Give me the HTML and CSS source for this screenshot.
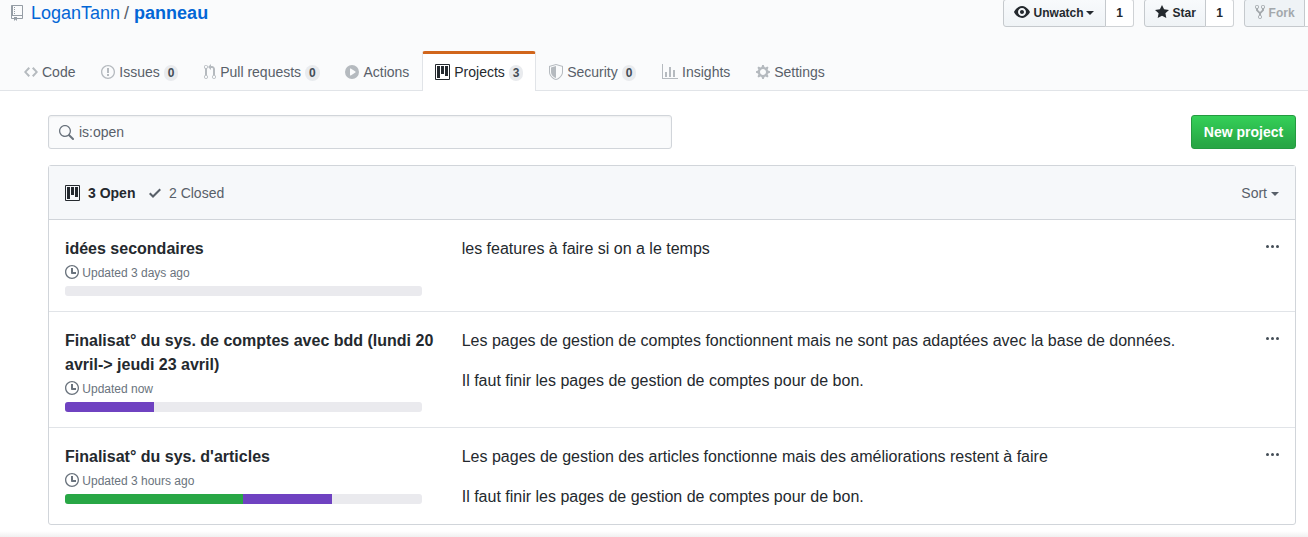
FILE: index.html
```html
<!DOCTYPE html>
<html lang="en">
<head>
<meta charset="utf-8">
<title>LoganTann/panneau</title>
<link rel="stylesheet" href="styles.css">
</head>
<body>
<svg class="sprite" aria-hidden="true">
  <symbol id="project" viewBox="0 0 15 16"><path fill-rule="evenodd" d="M10 12h3V2h-3v10zm-4-2h3V2H6v8zm-4 4h3V2H2v12zm-1 1h13V1H1v14zM14 0H1a1 1 0 0 0-1 1v14a1 1 0 0 0 1 1h13a1 1 0 0 0 1-1V1a1 1 0 0 0-1-1z"/></symbol>
  <symbol id="clock" viewBox="0 0 14 16"><path fill-rule="evenodd" d="M8 8h3v2H7c-.55 0-1-.45-1-1V4h2v4zM7 2.3c3.14 0 5.7 2.56 5.7 5.7s-2.56 5.7-5.7 5.7A5.71 5.71 0 0 1 1.3 8c0-3.14 2.56-5.7 5.7-5.7zM7 1C3.14 1 0 4.14 0 8s3.14 7 7 7 7-3.14 7-7-3.14-7-7-7z"/></symbol>
  <symbol id="dots" viewBox="0 0 13 16"><circle cx="1.5" cy="8.5" r="1.5"/><circle cx="6.5" cy="8.5" r="1.5"/><circle cx="11.5" cy="8.5" r="1.5"/></symbol>
</svg>
<header class="repohead">
  <div class="repohead-top">
    <h1 class="repo-title">
      <svg class="icon" width="12" height="16" viewBox="0 0 12 16"><path fill-rule="evenodd" d="M4 9H3V8h1v1zm0-3H3v1h1V6zm0-2H3v1h1V4zm0-2H3v1h1V2zm8-1v12c0 .55-.45 1-1 1H6v2l-1.5-1.5L3 16v-2H1c-.55 0-1-.45-1-1V1c0-.55.45-1 1-1h10c.55 0 1 .45 1 1zm-1 10H1v2h2v-1h3v1h5v-2zm0-10H2v9h9V1z"/></svg>
      <a>LoganTann</a><span class="slash">/</span><a class="name">panneau</a>
    </h1>
    <div class="actions">
      <div class="action action-watch"><span class="btn-sm"><svg class="icon" width="16" height="16" viewBox="0 0 16 16"><path fill-rule="evenodd" d="M8.06 2C3 2 0 8 0 8s3 6 8.06 6C13 14 16 8 16 8s-3-6-7.94-6zM8 12c-2.2 0-4-1.78-4-4 0-2.2 1.8-4 4-4 2.22 0 4 1.8 4 4 0 2.22-1.78 4-4 4zm2-4c0 1.11-.89 2-2 2-1.11 0-2-.89-2-2 0-1.11.89-2 2-2 1.11 0 2 .89 2 2z"/></svg>Unwatch<i class="caret"></i></span><span class="social-count">1</span></div>
      <div class="action action-star"><span class="btn-sm"><svg class="icon" width="14" height="16" viewBox="0 0 14 16"><path d="M14 6l-4.9-.64L7 1 4.9 5.36 0 6l3.6 3.26L2.67 14 7 11.67 11.33 14l-.93-4.74L14 6z"/></svg>Star</span><span class="social-count">1</span></div>
      <div class="action action-fork"><span class="btn-sm disabled"><svg class="icon" width="10" height="16" viewBox="0 0 10 16"><path fill-rule="evenodd" d="M8 1a1.993 1.993 0 0 0-1 3.72V6L5 8 3 6V4.72A1.993 1.993 0 0 0 2 1a1.993 1.993 0 0 0-1 3.72V6.5l3 3v1.78A1.993 1.993 0 0 0 5 15a1.993 1.993 0 0 0 1-3.72V9.5l3-3V4.72A1.993 1.993 0 0 0 8 1zM2 4.2C1.34 4.2.8 3.65.8 3c0-.65.55-1.2 1.2-1.2.65 0 1.2.55 1.2 1.2 0 .65-.55 1.2-1.2 1.2zm3 10c-.66 0-1.2-.55-1.2-1.2 0-.65.55-1.2 1.2-1.2.65 0 1.2.55 1.2 1.2 0 .65-.55 1.2-1.2 1.2zm3-10c-.66 0-1.2-.55-1.2-1.2 0-.65.55-1.2 1.2-1.2.65 0 1.2.55 1.2 1.2 0 .65-.55 1.2-1.2 1.2z"/></svg>Fork</span><span class="social-count cut"></span></div>
    </div>
  </div>
  <nav class="tabs">
    <a class="tab"><svg class="icon" width="14" height="16" viewBox="0 0 14 16"><path fill-rule="evenodd" d="M9.5 3L8 4.5 11.5 8 8 11.5 9.5 13 14 8 9.5 3zm-5 0L0 8l4.5 5L6 11.5 2.5 8 6 4.5 4.5 3z"/></svg>Code</a>
    <a class="tab"><svg class="icon" width="14" height="16" viewBox="0 0 14 16"><path fill-rule="evenodd" d="M7 2.3c3.14 0 5.7 2.56 5.7 5.7s-2.56 5.7-5.7 5.7A5.71 5.71 0 0 1 1.3 8c0-3.14 2.56-5.7 5.7-5.7zM7 1C3.14 1 0 4.14 0 8s3.14 7 7 7 7-3.14 7-7-3.14-7-7-7zm1 3H6v5h2V4zm0 6H6v2h2v-2z"/></svg>Issues<span class="counter">0</span></a>
    <a class="tab"><svg class="icon" width="12" height="16" viewBox="0 0 12 16"><path fill-rule="evenodd" d="M11 11.28V5c-.03-.78-.34-1.47-.94-2.06C9.46 2.35 8.78 2.03 8 2H7V0L4 3l3 3V4h1c.27.02.48.11.69.31.21.2.3.42.31.69v6.28A1.993 1.993 0 0 0 10 15a1.993 1.993 0 0 0 1-3.72zm-1 2.92c-.66 0-1.2-.55-1.2-1.2 0-.65.55-1.2 1.2-1.2.65 0 1.2.55 1.2 1.2 0 .65-.55 1.2-1.2 1.2zM4 3c0-1.11-.89-2-2-2a1.993 1.993 0 0 0-1 3.72v6.56A1.993 1.993 0 0 0 2 15a1.993 1.993 0 0 0 1-3.72V4.72c.59-.34 1-.98 1-1.72zm-.8 10c0 .66-.55 1.2-1.2 1.2-.65 0-1.2-.55-1.2-1.2 0-.65.55-1.2 1.2-1.2.65 0 1.2.55 1.2 1.2zM2 4.2C1.34 4.2.8 3.65.8 3c0-.65.55-1.2 1.2-1.2.65 0 1.2.55 1.2 1.2 0 .65-.55 1.2-1.2 1.2z"/></svg>Pull requests<span class="counter">0</span></a>
    <a class="tab"><svg class="icon" width="14" height="16" viewBox="0 0 14 16"><path fill-rule="evenodd" d="M14 8A7 7 0 1 1 0 8a7 7 0 0 1 14 0zm-8.223 3.482l4.599-3.066a.5.5 0 0 0 0-.832L5.777 4.518A.5.5 0 0 0 5 4.934v6.132a.5.5 0 0 0 .777.416z"/></svg>Actions</a>
    <a class="tab selected"><svg class="icon" width="15" height="16"><use href="#project"/></svg>Projects<span class="counter">3</span></a>
    <a class="tab"><svg class="icon" width="14" height="16" viewBox="0 0 14 16"><path fill-rule="evenodd" d="M0 2l7-2 7 2v6.02C14 12.69 8.69 16 7 16c-1.69 0-7-3.31-7-7.98V2zm1 .75L7 1l6 1.75v5.268C13 12.104 8.449 15 7 15c-1.449 0-6-2.896-6-6.982V2.75zm1 .75L7 2v12c-1.207 0-5-2.482-5-5.985V3.5z"/></svg>Security<span class="counter">0</span></a>
    <a class="tab"><svg class="icon" width="16" height="16" viewBox="0 0 16 16"><path fill-rule="evenodd" d="M16 14v1H0V0h1v14h15zM5 13H3V8h2v5zm4 0H7V3h2v10zm4 0h-2V6h2v7z"/></svg>Insights</a>
    <a class="tab"><svg class="icon" width="14" height="16" viewBox="0 0 14 16"><path fill-rule="evenodd" d="M14 8.77v-1.6l-1.94-.64-.45-1.09.88-1.84-1.13-1.13-1.81.91-1.09-.45-.69-1.92h-1.6l-.63 1.94-1.11.45-1.84-.88-1.13 1.13.91 1.81-.45 1.09L0 7.23v1.59l1.94.64.45 1.09-.88 1.84 1.13 1.13 1.81-.91 1.09.45.69 1.92h1.59l.63-1.94 1.11-.45 1.84.88 1.13-1.13-.92-1.81.47-1.09L14 8.75v.02zM7 11c-1.66 0-3-1.34-3-3s1.34-3 3-3 3 1.34 3 3-1.34 3-3 3z"/></svg>Settings</a>
  </nav>
</header>
<main class="content">
  <div class="toolbar">
    <div class="search"><svg class="icon" width="16" height="16" viewBox="0 0 16 16"><path fill-rule="evenodd" d="M15.7 13.3l-3.81-3.83A5.93 5.93 0 0 0 13 6c0-3.31-2.69-6-6-6S1 2.69 1 6s2.69 6 6 6c1.3 0 2.48-.41 3.47-1.11l3.83 3.81c.19.2.45.3.7.3.25 0 .52-.09.7-.3a.996.996 0 0 0 0-1.41v.01zM7 10.7c-2.59 0-4.7-2.11-4.7-4.7 0-2.59 2.11-4.7 4.7-4.7 2.59 0 4.7 2.11 4.7 4.7 0 2.59-2.11 4.7-4.7 4.7z"/></svg>is:open</div>
    <a class="btn-primary">New project</a>
  </div>
  <section class="box">
    <div class="box-header">
      <span class="state open"><svg class="icon" width="15" height="16"><use href="#project"/></svg>3 Open</span>
      <span class="state closed"><svg class="icon" width="12" height="16" viewBox="0 0 12 16"><path d="M12 5l-8 8-4-4 1.5-1.5L4 10l6.5-6.5L12 5z"/></svg>2 Closed</span>
      <span class="sort">Sort<i class="caret"></i></span>
    </div>
    <article class="row">
      <div class="info">
        <h4>idées secondaires</h4>
        <div class="meta"><svg class="icon" width="14" height="16"><use href="#clock"/></svg>Updated 3 days ago</div>
        <div class="progress"></div>
      </div>
      <div class="desc"><p>les features à faire si on a le temps</p></div>
      <svg class="icon menu" width="13" height="16"><use href="#dots"/></svg>
    </article>
    <article class="row">
      <div class="info">
        <h4>Finalisat° du sys. de comptes avec bdd (lundi 20 avril-&gt; jeudi 23 avril)</h4>
        <div class="meta"><svg class="icon" width="14" height="16"><use href="#clock"/></svg>Updated now</div>
        <div class="progress"><span class="doing" style="width:25%"></span></div>
      </div>
      <div class="desc"><p>Les pages de gestion de comptes fonctionnent mais ne sont pas adaptées avec la base de données.</p><p>Il faut finir les pages de gestion de comptes pour de bon.</p></div>
      <svg class="icon menu" width="13" height="16"><use href="#dots"/></svg>
    </article>
    <article class="row">
      <div class="info">
        <h4>Finalisat° du sys. d'articles</h4>
        <div class="meta"><svg class="icon" width="14" height="16"><use href="#clock"/></svg>Updated 3 hours ago</div>
        <div class="progress"><span class="done" style="width:49.8%"></span><span class="doing" style="width:25%"></span></div>
      </div>
      <div class="desc"><p>Les pages de gestion des articles fonctionne mais des améliorations restent à faire</p><p>Il faut finir les pages de gestion de comptes pour de bon.</p></div>
      <svg class="icon menu" width="13" height="16"><use href="#dots"/></svg>
    </article>
  </section>
</main>
<div class="bottom-shade"></div>
</body>
</html>
```
FILE: styles.css
```css
* { box-sizing: border-box; }
body {
  margin: 0;
  height: 537px;
  overflow: hidden;
  display: flex;
  flex-direction: column;
  background: #fff;
  color: #24292e;
  font: 14px/21px "Liberation Sans", Arial, sans-serif;
}
.sprite { display: none; }
.icon { fill: currentColor; flex: none; display: block; }
.caret {
  border: 4px solid transparent;
  border-top-color: currentColor;
  border-bottom: 0;
}

.repohead {
  height: 91px;
  flex: none;
  display: flex;
  flex-direction: column;
  justify-content: space-between;
  background: #fafbfc;
  border-bottom: 1px solid #e1e4e8;
}
.repohead-top {
  display: flex;
  justify-content: space-between;
  height: 27px;
}
.repo-title {
  display: flex;
  align-items: center;
  margin: 0 0 0 11px;
  height: 26px;
  font-size: 18px;
  font-weight: 400;
  color: #0366d6;
}
.repo-title .icon { color: #959da5; margin-right: 8px; }
.slash { color: #586069; margin: 0 5px 0 4px; }
.name { font-weight: 700; }

.actions { display: flex; gap: 10px; margin-top: -1px; height: 28px; }
.action {
  display: flex;
  font-size: 12px;
  font-weight: 700;
  line-height: 20px;
}
.action-watch { width: 131px; }
.action-star { width: 90px; }
.action-fork { width: 64px; }
.btn-sm {
  display: flex;
  flex: 1;
  align-items: center;
  padding: 0 9px 0 10px;
  gap: 3.6px;
  border: 1px solid #c5c9cd;
  border-radius: 3px 0 0 3px;
  background: linear-gradient(#f8fafc, #eff3f6);
}
.btn-sm .icon { margin-bottom: 2px; }
.btn-sm .caret { margin-left: -1px; }
.btn-sm.disabled { color: #a3a8ac; background: #eff3f6; }
.social-count {
  width: 28px;
  display: flex;
  align-items: center;
  justify-content: center;
  background: #fff;
  border: 1px solid #cfd2d5;
  border-left: 0;
  border-radius: 0 3px 3px 0;
}
.social-count.cut { width: 4px; border-right: 0; border-radius: 0; }

.tabs { display: flex; height: 40px; margin: 0 0 -1px 11px; }
.tab {
  display: flex;
  align-items: center;
  padding: 0 11.88px 1px 12px;
  border: 1px solid transparent;
  border-top-width: 3px;
  border-bottom: 0;
  border-radius: 3px 3px 0 0;
  color: #586069;
  white-space: nowrap;
}
.tab .icon { color: #b5babf; margin-right: 4px; }
.tab.selected {
  background: #fff;
  border-color: #d1661c #e1e4e8 transparent;
  color: #24292e;
}
.tab.selected .icon { color: #24292e; }
.counter {
  margin-left: 4px;
  padding: 2px 3.9px;
  border-radius: 20px;
  background: #e9ebee;
  color: #444d56;
  font-size: 12px;
  font-weight: 700;
  line-height: 12px;
  position: relative;
  top: 1px;
}

.content { padding: 24px 12px 0 48px; }
.toolbar { display: flex; justify-content: space-between; margin-bottom: 16px; }
.search {
  display: flex;
  align-items: center;
  width: 624px;
  height: 34px;
  padding: 0 9px;
  gap: 5px;
  border: 1px solid #d1d5da;
  border-radius: 3px;
  background: #fafbfc;
  box-shadow: inset 0 1px 2px rgba(27, 31, 35, .06);
  color: #586069;
}
.search .icon { margin-top: 2px; color: #6a737d; }
.btn-primary {
  width: 105px;
  height: 34px;
  border: 1px solid #249a40;
  border-radius: 3px;
  background: linear-gradient(#34d058, #28a745 90%);
  color: #fff;
  font-weight: 700;
  line-height: 32px;
  text-align: center;
}

.box { border: 1px solid #d1d5da; border-radius: 3px; }
.box-header {
  display: flex;
  align-items: center;
  height: 54px;
  padding: 1px 16px 0;
  gap: 13.5px;
  border-bottom: 1px solid #d1d5da;
  background: #f6f8fa;
  color: #586069;
}
.state { display: flex; align-items: center; gap: 8px; }
.state .icon { margin-bottom: 1px; }
.state.open { font-weight: 700; color: #24292e; }
.sort { display: flex; align-items: center; gap: 4px; margin-left: auto; }
.sort .caret { margin-top: 2px; }

.row {
  display: flex;
  align-items: flex-start;
  padding: 17px 16px 15px;
  font-size: 16px;
  line-height: 24px;
}
.row + .row { border-top: 1px solid #e1e4e8; }
.info { width: 396.7px; flex: none; }
h4 { margin: 0; padding-right: 20px; font-size: 16px; font-weight: 700; }
.meta {
  display: flex;
  align-items: center;
  gap: 3.3px;
  height: 24px;
  color: #6a737d;
  font-size: 12px;
}
.meta .icon { margin-bottom: 2px; }
.progress {
  display: flex;
  width: 357px;
  height: 10px;
  margin: 1px 0 0;
  overflow: hidden;
  border-radius: 3px;
  background: #eaeaee;
}
.done { background: #28a745; }
.doing { background: #6f42c1; }
.desc { flex: 1; }
.desc p { margin: 0; }
.desc p + p { margin-top: 16px; }
.menu { color: #444d56; margin-top: 1px; }

.bottom-shade {
  height: 6px;
  margin-top: auto;
  background: linear-gradient(#fff, #f0f0f0);
}
```
